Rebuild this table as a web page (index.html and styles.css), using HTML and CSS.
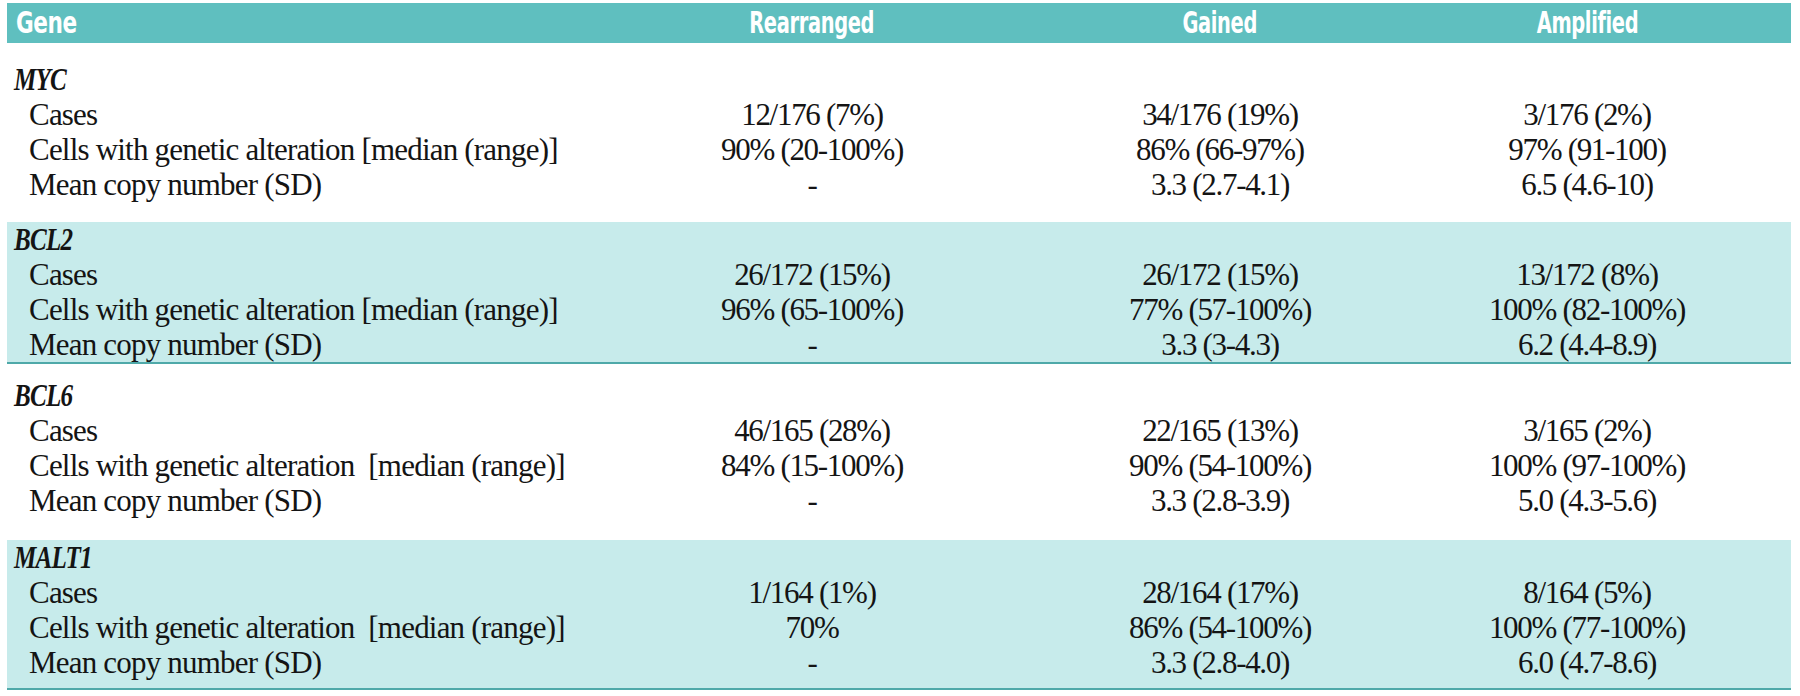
FILE: index.html
```html
<!DOCTYPE html>
<html lang="en">
<head>
<meta charset="utf-8">
<title>Genetic alterations</title>
<link rel="stylesheet" href="styles.css">
</head>
<body>
<div class="table">
  <div class="row head">
    <div class="c label"><span class="hx">Gene</span></div>
    <div class="c"><span class="hx">Rearranged</span></div>
    <div class="c"><span class="hx">Gained</span></div>
    <div class="c"><span class="hx">Amplified</span></div>
  </div>

  <div class="sec sec-myc">
    <div class="row"><div class="c gene"><span class="gn">MYC</span></div></div>
    <div class="row"><div class="c label">Cases</div><div class="c">12/176 (7%)</div><div class="c">34/176 (19%)</div><div class="c">3/176 (2%)</div></div>
    <div class="row"><div class="c label">Cells with genetic alteration [median (range)]</div><div class="c">90% (20-100%)</div><div class="c">86% (66-97%)</div><div class="c">97% (91-100)</div></div>
    <div class="row"><div class="c label">Mean copy number (SD)</div><div class="c">-</div><div class="c">3.3 (2.7-4.1)</div><div class="c">6.5 (4.6-10)</div></div>
  </div>

  <div class="sec band sec-bcl2">
    <div class="row"><div class="c gene"><span class="gn">BCL2</span></div></div>
    <div class="row"><div class="c label">Cases</div><div class="c">26/172 (15%)</div><div class="c">26/172 (15%)</div><div class="c">13/172 (8%)</div></div>
    <div class="row"><div class="c label">Cells with genetic alteration [median (range)]</div><div class="c">96% (65-100%)</div><div class="c">77% (57-100%)</div><div class="c">100% (82-100%)</div></div>
    <div class="row"><div class="c label">Mean copy number (SD)</div><div class="c">-</div><div class="c">3.3 (3-4.3)</div><div class="c">6.2 (4.4-8.9)</div></div>
  </div>

  <div class="sec sec-bcl6">
    <div class="row"><div class="c gene"><span class="gn">BCL6</span></div></div>
    <div class="row"><div class="c label">Cases</div><div class="c">46/165 (28%)</div><div class="c">22/165 (13%)</div><div class="c">3/165 (2%)</div></div>
    <div class="row"><div class="c label">Cells with genetic alteration&nbsp; [median (range)]</div><div class="c">84% (15-100%)</div><div class="c">90% (54-100%)</div><div class="c">100% (97-100%)</div></div>
    <div class="row"><div class="c label">Mean copy number (SD)</div><div class="c">-</div><div class="c">3.3 (2.8-3.9)</div><div class="c">5.0 (4.3-5.6)</div></div>
  </div>

  <div class="sec band sec-malt1">
    <div class="row"><div class="c gene"><span class="gn">MALT1</span></div></div>
    <div class="row"><div class="c label">Cases</div><div class="c">1/164 (1%)</div><div class="c">28/164 (17%)</div><div class="c">8/164 (5%)</div></div>
    <div class="row"><div class="c label">Cells with genetic alteration&nbsp; [median (range)]</div><div class="c">70%</div><div class="c">86% (54-100%)</div><div class="c">100% (77-100%)</div></div>
    <div class="row"><div class="c label">Mean copy number (SD)</div><div class="c">-</div><div class="c">3.3 (2.8-4.0)</div><div class="c">6.0 (4.7-8.6)</div></div>
  </div>
</div>
</body>
</html>
```
FILE: styles.css
```css
* { box-sizing: border-box; }
html, body { margin: 0; padding: 0; background: #ffffff; }
body {
  font-family: "Liberation Serif", "Times New Roman", serif;
  color: #141414;
}
.table {
  width: 1784px;
  margin: 3px 0 0 7px;
}
.row {
  display: grid;
  grid-template-columns: 560px 490px 326px 408px;
  font-size: 31px;
  line-height: 35px;
  letter-spacing: -1.3px;
  height: 35px;
  white-space: nowrap;
}
.c { text-align: center; }
.c.label { text-align: left; padding-left: 22px; letter-spacing: -0.8px; }
.c.gene {
  text-align: left;
  padding-left: 7px;
  font-weight: bold;
  font-style: italic;
  letter-spacing: -1px;
}
.gn {
  display: inline-block;
  transform: scaleX(0.81);
  transform-origin: left center;
}
.row.head {
  height: 40px;
  line-height: 40px;
  background: #5fbfbf;
  color: #ffffff;
  font-family: "DejaVu Sans Condensed", "DejaVu Sans", sans-serif;
  font-weight: bold;
  font-size: 30px;
  letter-spacing: -0.5px;
}
.hx {
  display: inline-block;
  transform: scaleX(0.72);
  transform-origin: center center;
}
.row.head .c.label { padding-left: 9px; letter-spacing: -0.5px; }
.row.head .c.label .hx { transform: scaleX(0.8); transform-origin: left center; }
.sec { display: flex; flex-direction: column; }
.band {
  background: #c7ebeb;
  border-bottom: 2px solid #4fa9a9;
}
.sec-myc { padding: 19px 0 20px; }
.sec-bcl2 { padding: 0; }
.sec-bcl6 { padding: 14px 0 22px; }
.sec-malt1 { padding: 0 0 8px; }
```
